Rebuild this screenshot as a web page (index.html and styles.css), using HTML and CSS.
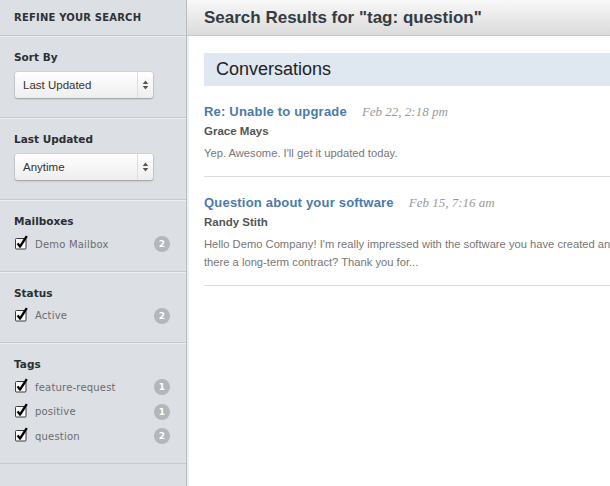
FILE: index.html
```html
<!DOCTYPE html>
<html>
<head>
<meta charset="utf-8">
<title>Search Results</title>
<link rel="stylesheet" href="styles.css">
</head>
<body>
<div class="app">
  <aside class="sidebar">
    <div class="side-head">Refine your search</div>

    <section class="filter">
      <h3>Sort By</h3>
      <div class="select">
        <span class="value">Last Updated</span>
        <span class="arrows"><svg width="7" height="10" viewBox="0 0 7 10"><path d="M3.5 0.5 L6.3 4 H0.7Z M0.7 6 H6.3 L3.5 9.5Z" fill="#555"/></svg></span>
      </div>
    </section>

    <section class="filter">
      <h3>Last Updated</h3>
      <div class="select">
        <span class="value">Anytime</span>
        <span class="arrows"><svg width="7" height="10" viewBox="0 0 7 10"><path d="M3.5 0.5 L6.3 4 H0.7Z M0.7 6 H6.3 L3.5 9.5Z" fill="#555"/></svg></span>
      </div>
    </section>

    <section class="filter filter-list">
      <h3>Mailboxes</h3>
      <ul class="checks">
        <li><svg class="cb" viewBox="0 0 13 15"><rect x="0.5" y="3.5" width="10.5" height="10.5" rx="1" fill="#fafafa" stroke="#3a3a3a"/><path d="M2.6 8.4 L5 11.6 L11.8 1.2" fill="none" stroke="#000" stroke-width="2.4" stroke-linejoin="round"/></svg><span class="label">Demo Mailbox</span><span class="badge">2</span></li>
      </ul>
    </section>

    <section class="filter filter-list">
      <h3>Status</h3>
      <ul class="checks">
        <li><svg class="cb" viewBox="0 0 13 15"><rect x="0.5" y="3.5" width="10.5" height="10.5" rx="1" fill="#fafafa" stroke="#3a3a3a"/><path d="M2.6 8.4 L5 11.6 L11.8 1.2" fill="none" stroke="#000" stroke-width="2.4" stroke-linejoin="round"/></svg><span class="label">Active</span><span class="badge">2</span></li>
      </ul>
    </section>

    <section class="filter filter-list">
      <h3>Tags</h3>
      <ul class="checks">
        <li><svg class="cb" viewBox="0 0 13 15"><rect x="0.5" y="3.5" width="10.5" height="10.5" rx="1" fill="#fafafa" stroke="#3a3a3a"/><path d="M2.6 8.4 L5 11.6 L11.8 1.2" fill="none" stroke="#000" stroke-width="2.4" stroke-linejoin="round"/></svg><span class="label">feature-request</span><span class="badge">1</span></li>
        <li><svg class="cb" viewBox="0 0 13 15"><rect x="0.5" y="3.5" width="10.5" height="10.5" rx="1" fill="#fafafa" stroke="#3a3a3a"/><path d="M2.6 8.4 L5 11.6 L11.8 1.2" fill="none" stroke="#000" stroke-width="2.4" stroke-linejoin="round"/></svg><span class="label">positive</span><span class="badge">1</span></li>
        <li><svg class="cb" viewBox="0 0 13 15"><rect x="0.5" y="3.5" width="10.5" height="10.5" rx="1" fill="#fafafa" stroke="#3a3a3a"/><path d="M2.6 8.4 L5 11.6 L11.8 1.2" fill="none" stroke="#000" stroke-width="2.4" stroke-linejoin="round"/></svg><span class="label">question</span><span class="badge">2</span></li>
      </ul>
    </section>
  </aside>

  <main class="main">
    <div class="main-head"><h1>Search Results for "tag: question"</h1></div>
    <div class="content">
      <h2 class="band">Conversations</h2>

      <article class="result">
        <div class="result-title"><a class="subject">Re: Unable to upgrade</a><span class="date">Feb 22, 2:18 pm</span></div>
        <div class="name">Grace Mays</div>
        <p class="snippet">Yep. Awesome. I'll get it updated today.</p>
      </article>

      <article class="result">
        <div class="result-title"><a class="subject">Question about your software</a><span class="date">Feb 15, 7:16 am</span></div>
        <div class="name">Randy Stith</div>
        <p class="snippet">Hello Demo Company! I'm really impressed with the software you have created and I was wondering, is<br>there a long-term contract? Thank you for...</p>
      </article>
    </div>
  </main>
</div>
</body>
</html>
```
FILE: styles.css
```css
html, body {
  margin: 0;
  padding: 0;
  overflow: hidden;
  background: #fff;
  font-family: "Liberation Sans", Arial, sans-serif;
}

.app {
  display: flex;
  height: 486px;
  overflow: hidden;
}

/* Sidebar */
.sidebar {
  width: 186px;
  flex: none;
  background: #dcdfe3;
  border-right: 1px solid #b8bbc0;
  font-family: "DejaVu Sans", sans-serif;
}

.side-head {
  height: 35px;
  line-height: 35px;
  padding-left: 14px;
  font-size: 10px;
  font-weight: bold;
  text-transform: uppercase;
  letter-spacing: 0.2px;
  color: #2e3236;
  border-bottom: 1px solid #c4c7cb;
}

.filter {
  border-top: 1px solid #eceef0;
  border-bottom: 1px solid #c6c9cd;
  padding: 13px 16px 19px 14px;
}

.filter-list {
  padding-bottom: 14px;
}

.filter h3 {
  margin: 0 0 8px;
  font-size: 10.5px;
  line-height: 14px;
  font-weight: bold;
  color: #2b2f33;
}

.filter-list h3 {
  margin-bottom: 4px;
}

.select {
  margin-left: 1px;
  width: 138px;
  height: 26px;
  display: flex;
  border-radius: 3px;
  background: linear-gradient(#ffffff, #eeeeee);
  box-shadow: 0 1px 2px rgba(0, 0, 0, 0.28), 0 0 0 1px rgba(0, 0, 0, 0.04);
  font-family: "Liberation Sans", Arial, sans-serif;
  font-size: 11.5px;
  color: #333;
}

.select .value {
  flex: 1;
  padding-left: 8px;
  line-height: 26px;
}

.select .arrows {
  width: 15px;
  border-left: 1px solid #dedede;
  display: flex;
  align-items: center;
  justify-content: center;
}

.checks {
  list-style: none;
  margin: 0;
  padding: 0;
}

.checks li {
  display: flex;
  align-items: center;
  height: 24.5px;
  margin-left: 1px;
}

.cb {
  width: 13px;
  height: 15px;
  margin: -3px 7px 0 0;
  flex: none;
}

.label {
  flex: 1;
  font-size: 10px;
  letter-spacing: 0.2px;
  color: #6a6d72;
}

.badge {
  width: 16px;
  height: 16px;
  border-radius: 50%;
  background: #b3b6ba;
  color: #fff;
  font-size: 9px;
  font-weight: bold;
  line-height: 16px;
  text-align: center;
}

/* Main */
.main {
  flex: 1;
  min-width: 0;
  box-shadow: inset 2px 0 0 #eceef0;
}

.main-head {
  height: 35px;
  border-bottom: 1px solid #c7c7c7;
  background: linear-gradient(#f8f8f8, #dbdbdb);
  padding-left: 17px;
}

.main-head h1 {
  margin: 0;
  font-size: 17px;
  line-height: 35px;
  font-weight: bold;
  color: #363b40;
  white-space: nowrap;
}

.content {
  width: 470px;
  padding: 17px 0 0 17px;
}

.band {
  margin: 0;
  height: 33px;
  line-height: 33px;
  padding-left: 12px;
  background: #dfe7f1;
  font-size: 18px;
  font-weight: normal;
  color: #222;
}

.result {
  padding: 15px 0 14px;
  border-bottom: 1px solid #dcdcdc;
}

.result-title {
  line-height: 20px;
  white-space: nowrap;
}

.subject {
  font-size: 13px;
  font-weight: bold;
  letter-spacing: 0.2px;
  color: #4a7aab;
}

.date {
  margin-left: 15px;
  font-family: "Liberation Serif", "Times New Roman", serif;
  font-style: italic;
  font-size: 13px;
  color: #9a9a9a;
}

.name {
  font-size: 11.5px;
  line-height: 18px;
  font-weight: bold;
  color: #555;
}

.snippet {
  margin: 4px 0 0;
  font-size: 11.2px;
  line-height: 18px;
  color: #777;
  white-space: nowrap;
}
```
